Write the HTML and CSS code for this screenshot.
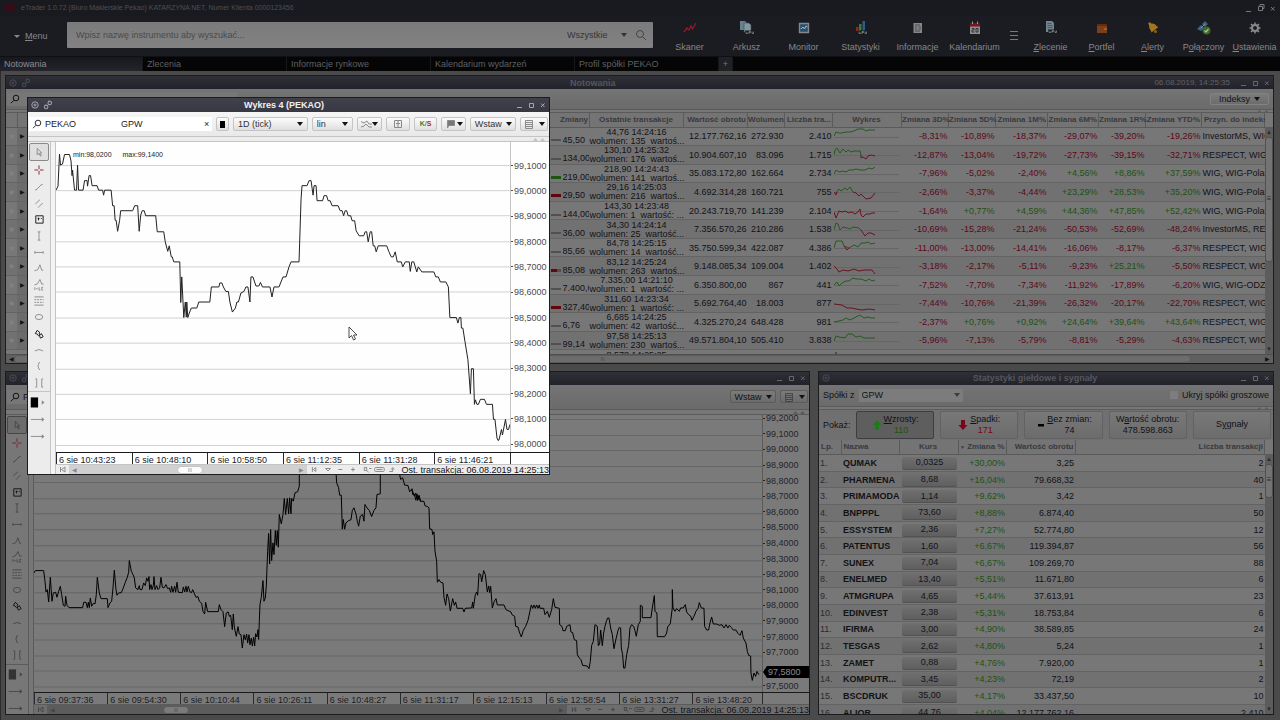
FILE: index.html
```html
<!DOCTYPE html>
<html lang="pl">
<head>
<meta charset="utf-8">
<title>eTrader</title>
<link rel="stylesheet" href="styles.css">
</head>
<body>
<svg class="defs" aria-hidden="true">
  <symbol id="i-gear" viewBox="0 0 10 10"><circle cx="5" cy="5" r="3.2"/><circle cx="5" cy="5" r="1"/></symbol>
  <symbol id="i-link" viewBox="0 0 10 10"><rect x="5" y="1" width="3.4" height="3.4" rx="1.4" transform="rotate(20 6 3)"/><rect x="1.4" y="5.2" width="3.4" height="3.4" rx="1.4" transform="rotate(20 3 7)"/><path d="M4.2 5.8 5.6 4.2"/></symbol>
  <symbol id="i-loupe" viewBox="0 0 10 10"><circle cx="6" cy="4" r="2.8"/><path d="M4 6.2 1 9.2"/></symbol>
  <symbol id="i-win" viewBox="0 0 34 10"><path d="M2 7.500H7M14.500 3.500H18.500V7.500H14.500ZM26 3.500 29.500 7M29.500 3.500 26 7"/></symbol>
  <symbol id="i-up2" viewBox="0 0 12 4"><path d="M0 4 2.500 1 5 4ZM7 4 9.500 1 12 4Z"/></symbol>
  <symbol id="t-cursor" viewBox="0 0 24 16"><path d="M10 4v7l2-1.500 1.500 3 1-.5-1.500-3H15Z"/></symbol>
  <symbol id="t-cross" viewBox="0 0 24 16"><path d="M12 3v4M12 9v4M7 8h4M13 8h4" class="red"/></symbol>
  <symbol id="t-line" viewBox="0 0 24 16"><path d="M8.500 11.500 15 5M8 11h1.500M14.500 5.500h1.500"/></symbol>
  <symbol id="t-par" viewBox="0 0 24 16"><path d="M8 9 13 4.500M11 13l5-5"/></symbol>
  <symbol id="t-note" viewBox="0 0 24 16"><path class="strong" d="M8.500 4.500h8v8h-8ZM10.500 7.500h2M11.500 6.500v3M14 7.500h1"/></symbol>
  <symbol id="t-vert" viewBox="0 0 24 16"><path d="M12 3.500v9M10.500 3.500h3M10.500 12.500h3"/></symbol>
  <symbol id="t-horz" viewBox="0 0 24 16"><path d="M7.500 8.500h9M7.500 7v3M16.500 7v3"/></symbol>
  <symbol id="t-zig" viewBox="0 0 24 16"><path d="M7 11 10.500 10 13 4.500 15 10.500h1.500"/></symbol>
  <symbol id="t-abc" viewBox="0 0 24 16"><path d="M7 8 10.500 6.500 13 2l2 5h2M7.500 10.500v3M9 12h1.500M12 10.500v3h1.500M16.500 10.500H15v3h1.500"/></symbol>
  <symbol id="t-fib" viewBox="0 0 24 16"><path d="M7 3.500h10M7 12.500h10"/><path stroke-dasharray="2 1" d="M7 6.500h10M7 9.500h10"/></symbol>
  <symbol id="t-oval" viewBox="0 0 24 16"><ellipse cx="12" cy="8" rx="4" ry="2.800"/></symbol>
  <symbol id="t-arrows" viewBox="0 0 24 16"><path class="strong" d="M8 7.500 10 4l3 2.500-1 .5 1 2-1.500 1L10 8ZM12.500 9.500l1.500-1 .5-1 2 3.500-3 1.500Z"/></symbol>
  <symbol id="t-arc" viewBox="0 0 24 16"><path d="M7.500 9q4.500-3 9 0"/></symbol>
  <symbol id="t-brace" viewBox="0 0 24 16"><path d="M13 4q-1.500 0-1.500 2t-1 2q1 0 1 2t1.500 2"/></symbol>
  <symbol id="t-range" viewBox="0 0 24 16"><path d="M8 3.500h1.500v9H8M16.500 3.500H15v9h1.500"/></symbol>
  <symbol id="t-swatch" viewBox="0 0 24 16"><path class="fill" d="M3 3h8v11H3Z"/><path class="head" d="M15 6l3 2.500L15 11Z"/></symbol>
  <symbol id="t-right" viewBox="0 0 24 16"><path d="M3 8.500h13"/><path class="head" d="M15 6l3 2.500L15 11Z"/></symbol>
  <symbol id="s-foot" viewBox="0 0 96 9"><path d="M5.500 2v5M9 2.500 6.500 4.500 9 6.500ZM19 3.500h5l-2.500 2.500ZM32 4.500h4M45 4.500h4M47 2.500v4M58.500 2.500h2.500v3h-2.500ZM61 5.500l2 2M63.500 3.500H66M70 2.500h8q1 0 1 2t-1 2h-8q-1 0-1-2t1-2ZM71 4.500h6M84 6.500h3.500v-3M86 4.500l1.500-2 1.500 2"/></symbol>
</svg>

<header class="titlebar">
  <span class="brand"></span>
  <span>eTrader 1.0.72 (Biuro Maklerskie Pekao) KATARZYNA NET, Numer Klienta 0000123456</span>
  <svg class="appwin" viewBox="0 0 34 10"><path d="M2 8.500H7M14.500 3.500h4v4h-4ZM16 3.500v-2h4v4h-2M27 4l3.500 3.500M30.500 4 27 7.500"/></svg>
</header>

<div class="topbar">
  <button class="menu"><i class="tri"></i><span><u>M</u>enu</span></button>
  <form class="search">
    <input type="text" aria-label="Szukaj instrumentu" placeholder="Wpisz nazwę instrumentu aby wyszukać...">
    <span class="pick"><select aria-label="Zakres"><option>Wszystkie</option></select></span>
    <button type="button" class="go" aria-label="Szukaj"><svg viewBox="0 0 12 12"><circle cx="5" cy="5" r="3.500"/><path d="M7.500 7.500 11 11"/></svg></button>
  </form>
  <nav class="apps wide">
    <button><svg viewBox="0 0 16 16"><path d="M2 12 5 8l2 2 2-4 1.500 3L14 3" fill="none" stroke="#9c1626" stroke-width="1.300"/></svg>Skaner</button>
    <button><svg viewBox="0 0 16 16"><path d="M1 1h5l2 2v7H1Z" fill="#66808c"/><path d="M5 3h5l2 2v7H5Z" fill="#8498a0" stroke="#3c4c54" stroke-width=".6"/><path d="M6 10.500h10v4H6Z" fill="#15161a"/><path d="M7 11.500v2h1.500v-1M10 14v-2.500h1.500v1H10M13 11.500v2h1.500v-2" fill="none" stroke="#8a8a8a" stroke-width=".8"/></svg>Arkusz</button>
    <button><svg viewBox="0 0 16 16"><path d="M3.500 3.500h9v9h-9Z" fill="#27506f" stroke="#868686" stroke-width="1.400"/><path d="M5 9l2-2 1.500 2L10 6l1.500 1" fill="none" stroke="#a8bcc8"/></svg>Monitor</button>
    <button><svg viewBox="0 0 16 16"><path d="M3 7h2.500v4H3Z" fill="#8c2a1c"/><path d="M6 4h2.500v7H6Z" fill="#3e7a2c"/><path d="M9.500 1H12v10H9.500Z" fill="#2c5c8c"/><path d="M5 10.500h10v4H5Z" fill="#15161a"/><path d="M6 11.500v2h1.500v-1M9 14v-2.500h1.500v1H9M12 11.500v2h1.500v-2" fill="none" stroke="#8a8a8a" stroke-width=".8"/></svg>Statystyki</button>
    <button><svg viewBox="0 0 16 16"><path d="M3.500 3H12v10H3.500Z" fill="#868686"/><path d="M5 5h5M5 7h2M8.500 7H11M5 9h2M8.500 9H11M5 11h5" fill="none" stroke="#33343a" stroke-width=".7"/></svg>Informacje</button>
    <button><svg viewBox="0 0 16 16"><path d="M3 3h10v11H3Z" fill="#8c8c8c"/><path d="M3 3h10v3.500H3Z" fill="#7c1420"/><path d="M5.500 1.500v2.500M10.500 1.500v2.500" stroke="#9a9a9a"/><path d="M5 8.500h2v1.500H5V12h2.500M9 8.500V12h2V8.500Z" fill="none" stroke="#33343a"/></svg>Kalendarium</button>
  </nav>
  <button class="burger" aria-label="Więcej"><svg viewBox="0 0 10 12"><path d="M1 2.500h8M1 6.500h8M1 10.500h8"/></svg></button>
  <nav class="apps">
    <button><svg viewBox="0 0 16 16"><path d="M3 1h6l2 2v9H3Z" fill="#71858e"/><path d="M4.500 3.500h4M4.500 5.500h5M4.500 7.500h5" stroke="#33474f" stroke-width=".7"/><path d="M5 9.500h11v4H5Z" fill="#15161a"/><path d="M6 10.500v2h1.500v-1M9 13v-2.500h1.500v1H9M12 10.500v2h1.500v-2" fill="none" stroke="#8a8a8a" stroke-width=".8"/></svg><span><u>Z</u>lecenie</span></button>
    <button><svg viewBox="0 0 16 16"><path d="M3 4h10v9H3Z" fill="#7c3f1c"/><path d="M3 4h10v2H3Z" fill="#5e2d13"/><path d="M10 8h3v2h-3Z" fill="#a05a30"/></svg><span><u>P</u>ortfel</span></button>
    <button><svg viewBox="0 0 16 16"><path d="M3 3.500 5 2l1 1.500q4-.5 6 3l1.500.5-7 5.500-.5-1.500Q3.500 8 4 5Z" fill="#a5741c"/><circle cx="10.500" cy="11.500" r="1.500" fill="#8a5f14"/></svg><span><u>A</u>lerty</span></button>
    <button><svg viewBox="0 0 16 16"><path d="M1 9 5 5l3 3-3 3ZM6 4l3-3 3 3-3 3Z" fill="#3a6486"/><path d="M5 8 9 4" stroke="#7f9db0"/><circle cx="10.500" cy="10.500" r="4" fill="#3f6a1c"/><path d="M8.500 10.500l1.500 1.500 2.500-3" fill="none" stroke="#b5b5b5" stroke-width="1.200"/></svg><span>P<u>o</u>łączony</span></button>
    <button><svg viewBox="0 0 16 16"><circle cx="8" cy="8" r="3" fill="none" stroke="#8a8a8a" stroke-width="2"/><path d="M8 2.500v2M8 11.500v2M2.500 8h2M11.500 8h2M4 4l1.500 1.500M10.500 10.500 12 12M12 4l-1.500 1.500M5.500 10.500 4 12" stroke="#8a8a8a" stroke-width="1.500"/></svg><span><u>U</u>stawienia</span></button>
  </nav>
</div>

<nav class="tabs">
  <button class="on">Notowania</button><button>Zlecenia</button><button>Informacje rynkowe</button><button>Kalendarium wydarzeń</button><button>Profil spółki PEKAO</button><button class="plus">+</button>
</nav>

<main class="desktop">
  <section class="win quotes">
    <div class="bar"><svg class="ic"><use href="#i-gear"/></svg><svg class="ic"><use href="#i-link"/></svg><h2>Notowania</h2><time>06.08.2019, 14:25:35</time><svg class="wb"><use href="#i-win"/></svg></div>
    <div class="tools"><label class="find"><svg class="ic"><use href="#i-loupe"/></svg><input type="text" aria-label="Filtr"></label><button class="btn arrow last">Indeksy</button></div>
    <div class="strip"><svg><use href="#i-up2"/></svg></div>
    <div class="scroller">
      <div class="clip">
      <table class="qt">
        <colgroup><col class="w11"><col class="w11"><col><col class="w94"><col class="w64"><col class="w37"><col class="w48"><col class="w69"><col class="w47"><col class="w47"><col class="w52"><col class="w51"><col class="w47"><col class="w56"><col class="w63"></colgroup>
        <thead><tr><th></th><th></th><th class="r">Zmiany</th><th>Ostatnie transakcje</th><th class="r">Wartość obrotu</th><th class="r">Wolumen</th><th class="r">Liczba tra...</th><th>Wykres</th><th class="r">Zmiana 3D%</th><th class="r">Zmiana 5D%</th><th class="r">Zmiana 1M%</th><th class="r">Zmiana 6M%</th><th class="r">Zmiana 1R%</th><th class="r">Zmiana YTD%</th><th class="l">Przyn. do indeks</th></tr></thead>
        <tbody>
        <tr><td class="st">★</td><td class="ar">▶</td><td><div class="px"><i></i><b>45,50</b></div></td><td class="tr"><p>44,76 14:24:16</p><p>wolumen: 135&nbsp; wartoś...</p></td><td>12.177.762,16</td><td>272.930</td><td>2.410</td><td class="sp"><svg viewBox="0 0 66 18"><path class="base" d="M0 9.500H65"/><path class="g" d="M0 8 2 4 5 5 8 5 12 4 16 4 20 3 24 1 29 1 32 3 35 2 41 2"/></svg></td><td class="dn">-8,31%</td><td class="dn">-10,89%</td><td class="dn">-18,37%</td><td class="dn">-29,07%</td><td class="dn">-39,20%</td><td class="dn">-19,26%</td><td class="l">InvestorMS, WIG</td></tr>
        <tr><td class="st">★</td><td class="ar">▶</td><td><div class="px"><i></i><b>134,00</b></div></td><td class="tr"><p>130,10 14:25:32</p><p>wolumen: 176&nbsp; wartoś...</p></td><td>10.904.607,10</td><td>83.096</td><td>1.715</td><td class="sp"><svg viewBox="0 0 66 18"><path class="base" d="M0 9.500H65"/><path class="g" d="M0 9 1 4 3 2 6 7 9 3 12 6 14 4 17 6 20 5 26 5 27 9"/><path class="d" d="M27 9 27 12 29 11 32 13 34 10 37 9 41 10"/></svg></td><td class="dn">-12,87%</td><td class="dn">-13,04%</td><td class="dn">-19,72%</td><td class="dn">-27,73%</td><td class="dn">-39,15%</td><td class="dn">-32,71%</td><td class="l">RESPECT, WIG</td></tr>
        <tr><td class="st">★</td><td class="ar">▶</td><td><div class="px"><i class="up"></i><b>219,00</b></div></td><td class="tr"><p>218,90 14:24:43</p><p>wolumen: 141&nbsp; wartoś...</p></td><td>35.083.172,80</td><td>162.664</td><td>2.734</td><td class="sp"><svg viewBox="0 0 66 18"><path class="base" d="M0 9.500H65"/><path class="g" d="M0 9 2 5 5 7 9 6 12 7 15 5 19 5 22 4 26 5 31 5 35 3 38 4 41 2"/></svg></td><td class="dn">-7,96%</td><td class="dn">-5,02%</td><td class="dn">-2,40%</td><td class="gn">+4,56%</td><td class="gn">+8,86%</td><td class="gn">+37,59%</td><td class="l">WIG, WIG-Polan</td></tr>
        <tr><td class="st">★</td><td class="ar">▶</td><td><div class="px"><i class="down"></i><b>29,50</b></div></td><td class="tr"><p>29,16 14:25:03</p><p>wolumen: 216&nbsp; wartoś...</p></td><td>4.692.314,28</td><td>160.721</td><td>755</td><td class="sp"><svg viewBox="0 0 66 18"><path class="base" d="M0 9.500H65"/><path class="g" d="M2 10 5 6 7 8 11 5 13 7 16 4 19 9"/><path class="d" d="M0 9 2 12 3 9M19 9 22 10 25 13 27 11 30 14 32 16 37 15 41 10"/></svg></td><td class="dn">-2,66%</td><td class="dn">-3,37%</td><td class="dn">-4,44%</td><td class="gn">+23,29%</td><td class="gn">+28,53%</td><td class="gn">+35,20%</td><td class="l">WIG, WIG-Polan</td></tr>
        <tr><td class="st">★</td><td class="ar">▶</td><td><div class="px"><i></i><b>144,00</b></div></td><td class="tr"><p>143,30 14:23:48</p><p>wolumen: 1&nbsp; wartość: ...</p></td><td>20.243.719,70</td><td>141.239</td><td>2.104</td><td class="sp"><svg viewBox="0 0 66 18"><path class="base" d="M0 9.500H65"/><path class="d" d="M0 10 2 16 5 9 8 10 12 9 14 11 18 10 21 12 24 10 26 7 27 13 29 15 32 12 36 12 38 11 41 11"/></svg></td><td class="dn">-1,64%</td><td class="gn">+0,77%</td><td class="gn">+4,59%</td><td class="gn">+44,36%</td><td class="gn">+47,85%</td><td class="gn">+52,42%</td><td class="l">WIG, WIG-Polan</td></tr>
        <tr><td class="st">★</td><td class="ar">▶</td><td><div class="px"><i></i><b>36,00</b></div></td><td class="tr"><p>34,30 14:24:14</p><p>wolumen: 25&nbsp; wartość...</p></td><td>7.356.570,26</td><td>210.286</td><td>1.538</td><td class="sp"><svg viewBox="0 0 66 18"><path class="base" d="M0 9.500H65"/><path class="g" d="M0 9 2 2 4 3 6 9 9 6 13 7 16 8 19 6 25 7 27 9"/><path class="d" d="M27 9 29 12 31 15 34 12 37 12 41 14"/></svg></td><td class="dn">-10,69%</td><td class="dn">-15,28%</td><td class="dn">-21,24%</td><td class="dn">-50,53%</td><td class="dn">-52,69%</td><td class="dn">-48,24%</td><td class="l">InvestorMS, RES</td></tr>
        <tr><td class="st">★</td><td class="ar">▶</td><td><div class="px"><i></i><b>85,66</b></div></td><td class="tr"><p>84,78 14:25:15</p><p>wolumen: 14&nbsp; wartość...</p></td><td>35.750.599,34</td><td>422.087</td><td>4.386</td><td class="sp"><svg viewBox="0 0 66 18"><path class="base" d="M0 9.500H65"/><path class="g" d="M0 9 2 2 8 2 10 7 15 9 20 6 24 8 27 4 31 4 34 3 37 5 41 4"/><path class="d" d="M10 7 13 11 15 9"/></svg></td><td class="dn">-11,00%</td><td class="dn">-13,00%</td><td class="dn">-14,41%</td><td class="dn">-16,06%</td><td class="dn">-8,17%</td><td class="dn">-6,37%</td><td class="l">RESPECT, WIG</td></tr>
        <tr><td class="st">★</td><td class="ar">▶</td><td><div class="px"><i class="down half"></i><b>85,08</b></div></td><td class="tr"><p>83,12 14:25:24</p><p>wolumen: 263&nbsp; wartoś...</p></td><td>9.148.085,34</td><td>109.004</td><td>1.402</td><td class="sp"><svg viewBox="0 0 66 18"><path class="base" d="M0 9.500H65"/><path class="d" d="M0 8 3 11 5 14 9 12 14 13 17 12 20 11 25 13 30 12 34 12 38 12 41 16"/></svg></td><td class="dn">-3,18%</td><td class="dn">-2,17%</td><td class="dn">-5,11%</td><td class="dn">-9,23%</td><td class="gn">+25,21%</td><td class="dn">-5,50%</td><td class="l">RESPECT, WIG</td></tr>
        <tr><td class="st">★</td><td class="ar">▶</td><td><div class="px"><i></i><b>7.400,00</b></div></td><td class="tr"><p>7.335,00 14:21:10</p><p>wolumen: 1&nbsp; wartość: ...</p></td><td>6.350.800,00</td><td>867</td><td>441</td><td class="sp"><svg viewBox="0 0 66 18"><path class="base" d="M0 9.500H65"/><path class="g" d="M0 9 3 6 5 10 8 7 12 5 15 5 19 2 22 3 27 3 32 5 35 3 38 5 41 4"/></svg></td><td class="dn">-7,52%</td><td class="dn">-7,70%</td><td class="dn">-7,34%</td><td class="dn">-11,92%</td><td class="dn">-17,89%</td><td class="dn">-6,20%</td><td class="l">WIG, WIG-ODZI</td></tr>
        <tr><td class="st">★</td><td class="ar">▶</td><td><div class="px"><i class="down"></i><b>327,40</b></div></td><td class="tr"><p>311,60 14:23:34</p><p>wolumen: 1&nbsp; wartość: ...</p></td><td>5.692.764,40</td><td>18.003</td><td>877</td><td class="sp"><svg viewBox="0 0 66 18"><path class="base" d="M0 9.500H65"/><path class="d" d="M0 9 8 10 13 13 18 13 22 14 28 15 35 14 41 15"/></svg></td><td class="dn">-7,44%</td><td class="dn">-10,76%</td><td class="dn">-21,39%</td><td class="dn">-26,32%</td><td class="dn">-20,17%</td><td class="dn">-22,70%</td><td class="l">RESPECT, WIG</td></tr>
        <tr><td class="st">★</td><td class="ar">▶</td><td><div class="px"><i></i><b>6,76</b></div></td><td class="tr"><p>6,685 14:24:25</p><p>wolumen: 42&nbsp; wartość...</p></td><td>4.325.270,24</td><td>648.428</td><td>981</td><td class="sp"><svg viewBox="0 0 66 18"><path class="base" d="M0 9.500H65"/><path class="g" d="M0 9 5 8 9 7 12 5 16 7 20 5 26 2 30 5 34 4 37 5 41 5"/></svg></td><td class="dn">-2,37%</td><td class="gn">+0,76%</td><td class="gn">+0,92%</td><td class="gn">+24,64%</td><td class="gn">+39,64%</td><td class="gn">+43,64%</td><td class="l">RESPECT, WIG</td></tr>
        <tr><td class="st">★</td><td class="ar">▶</td><td><div class="px"><i></i><b>99,14</b></div></td><td class="tr"><p>97,58 14:25:13</p><p>wolumen: 230&nbsp; wartoś...</p></td><td>49.571.804,10</td><td>505.410</td><td>3.838</td><td class="sp"><svg viewBox="0 0 66 18"><path class="base" d="M0 9.500H65"/><path class="g" d="M0 9 2 4 5 5 11 6 14 2 18 2 22 5 26 4 30 6 36 6 41 6"/></svg></td><td class="dn">-5,96%</td><td class="dn">-7,13%</td><td class="dn">-5,79%</td><td class="dn">-8,81%</td><td class="dn">-5,29%</td><td class="dn">-4,63%</td><td class="l">RESPECT, WIG</td></tr>
        <tr><td></td><td></td><td></td><td class="tr"><p>8,578 14:25:25</p><p>&nbsp;</p></td><td></td><td></td><td></td><td class="sp"><svg viewBox="0 0 66 18"><path class="g" d="M0 9 2 1 4 5"/></svg></td><td></td><td></td><td></td><td></td><td></td><td></td><td></td></tr>
        </tbody>
      </table>
      </div>
      <div class="vscroll"><i>▲</i><span class="vthumb long">≡</span><i>▼</i></div>
    </div>
    <div class="hscroll"><i>◀</i><span class="hthumb full">III</span><i>▶</i></div>
  </section>

  <section class="win back">
    <div class="bar"><svg class="ic"><use href="#i-gear"/></svg><svg class="ic"><use href="#i-link"/></svg><h2></h2><svg class="wb"><use href="#i-win"/></svg></div>
    <div class="tools"><label class="find"><svg class="ic"><use href="#i-loupe"/></svg><input type="text" value="PEKAO" aria-label="Instrument"></label><button class="btn arrow last word">Wstaw</button><button class="btn arrow menuish" aria-label="Lista"><svg class="list" viewBox="0 0 10 10"><path d="M1.500 1.500h7v8h-7ZM1.500 3.500h7M1.500 5.500h7M1.500 7.500h7"/></svg></button></div>
    <div class="strip"><svg><use href="#i-up2"/></svg></div>
    <div class="chart">
      <div class="palette"><div class="set">
        <button class="on" aria-label="Kursor"><svg><use href="#t-cursor"/></svg></button><button aria-label="Krzyż"><svg><use href="#t-cross"/></svg></button><button aria-label="Linia"><svg><use href="#t-line"/></svg></button><button aria-label="Linie równoległe"><svg><use href="#t-par"/></svg></button><button aria-label="Notatka"><svg><use href="#t-note"/></svg></button><button aria-label="Pion"><svg><use href="#t-vert"/></svg></button><button aria-label="Poziom"><svg><use href="#t-horz"/></svg></button><button aria-label="Zygzak"><svg><use href="#t-zig"/></svg></button><button aria-label="ABC"><svg><use href="#t-abc"/></svg></button><button aria-label="Fibonacci"><svg><use href="#t-fib"/></svg></button><button aria-label="Elipsa"><svg><use href="#t-oval"/></svg></button><button aria-label="Strzałki"><svg><use href="#t-arrows"/></svg></button><button aria-label="Łuk"><svg><use href="#t-arc"/></svg></button><button aria-label="Klamra"><svg><use href="#t-brace"/></svg></button><button aria-label="Zakres"><svg><use href="#t-range"/></svg></button></div>
        <div class="set2"><button aria-label="Kolor"><svg><use href="#t-swatch"/></svg></button><button aria-label="Styl"><svg><use href="#t-right"/></svg></button><button aria-label="Grubość"><svg><use href="#t-right"/></svg></button></div>
      </div>
      <div class="split"></div>
      <div class="area">
        <div class="plotrow">
          <svg class="plot" viewBox="34 414 728 277" preserveAspectRatio="none">
            <path class="grid" d="M34 418.500H762M34 434.500H762M34 449.500H762M34 465.500H762M34 481.500H762M34 497.500H762M34 512.500H762M34 528.500H762M34 544.500H762M34 559.500H762M34 575.500H762M34 591.500H762M34 607.500H762M34 622.500H762M34 638.500H762M34 654.500H762M34 669.500H762M34 685.500H762"/>
            <g transform="translate(0 470) scale(.3333)"><path class="price" d="M102 305 106 298 131 298 135 330 138 362 142 355 146 392 151 318 156 390 160 365 167 363 171 378 176 360 181 345 185 370 190 402 195 405 197 375 201 402 207 409 248 409 251 393 258 393 262 409 265 393 268 409 271 380 275 405 280 396 285 398 289 370 292 318 298 365 303 382 322 382 324 409 330 395 335 390 339 350 343 297 348 355 351 372 356 365 364 364 370 350 376 333 382 318 386 303 388 268 394 300 399 310 403 320 407 350 414 355 418 343 420 355 426 355 431 335 436 343 440 320 444 330 447 316 449 355 453 340 456 355 460 343 462 316 465 355 470 343 474 355 479 350 483 318 487 348 492 350 498 340 503 352 508 350 512 363 515 345 519 363 524 345 527 363 531 333 535 363 547 364 550 347 554 362 558 345 561 362 565 345 570 362 575 364 578 355 582 364 588 378 594 376 598 390 605 396 609 420 614 428 617 393 623 421 655 421 658 400 663 415 669 421 674 466 679 425 685 422 688 435 692 432 697 475 700 428 703 467 709 495 714 466 718 488 723 490 727 530 732 490 736 505 740 488 743 515 747 490 750 520 754 500 757 524 761 498 764 524 767 487 771 497 774 475 776 504 778 450 780 400 784 378 789 328 792 390 796 380 799 345 803 240 806 187 809 278 812 175 815 268 819 215 822 250 826 178 829 222 832 178 835 228 838 130 844 158 849 130 853 82 857 130 862 82 866 128 869 80 873 128 875 82 880 90 885 65 893 62 898 45 898 0M1008 0 1010 35 1016 50 1019 72 1024 72 1027 174 1030 145 1034 174 1038 155 1046 148 1053 146 1057 118 1062 110 1068 128 1072 150 1076 165 1081 135 1088 130 1092 150 1095 100 1101 110 1108 118 1115 136 1122 118 1128 110 1131 70 1141 68 1141 0M1197 0 1202 25 1208 20 1214 42 1224 43 1229 62 1236 55 1243 75 1247 66 1252 88 1256 75 1262 92"/></g>
            <g transform="translate(410 360) scale(.3333)"><path class="price" d="M2 388 6 383 8 400 14 400 17 417 21 398 24 417 27 402 32 420 42 421 45 434 52 436 57 440 59 503 66 505 68 520 72 512 75 570 80 600 82 663 87 655 92 663 99 665 102 708 107 732 111 698 116 712 121 749 128 712 133 732 137 722 141 741 158 741 162 752 166 741 185 740 188 722 190 741 196 700 200 692 203 702 207 637 212 640 215 662 221 628 226 640 232 692 236 674 239 694 242 675 247 740 253 720 258 712 262 731 282 731 288 745 303 752 306 760 314 765 317 795 324 797 328 812 334 827 340 807 347 795 354 777 362 740 364 731 368 741 372 731 376 741 380 731 384 741 388 731 390 741 401 741 405 760 412 750 418 768 425 745 430 712 435 738 448 741 449 790 456 795 459 808 466 808 470 795 480 790 483 812 488 814 493 835 500 838 502 880 508 890 513 895 518 912 532 914 537 922 541 900 545 852 550 840 555 790 562 795 565 853 569 848 572 806 577 853 581 815 585 795 589 780 593 770 597 770 602 800 607 820 612 862 618 833 624 808 628 798 632 800 634 860 638 880 641 920 645 920 650 880 656 852 660 800 665 790 671 795 675 808 679 825 685 790 691 780 691 732 697 735 697 769 723 769 727 740 733 703 735 750 741 755 742 826 764 826 770 815 773 797 781 787 787 740 787 685 789 740 795 750 800 742 808 750 812 740 820 740 826 730 830 752 836 760 842 764 846 777 852 765 858 750 864 742 868 724 874 740 882 741 884 795 890 806 896 806 900 785 905 767 910 788 920 788 928 792 936 790 942 800 948 790 954 800 958 792 964 798 970 806 978 806 984 816 990 822 996 808 1000 830 1008 845 1012 870 1016 882 1022 884 1023 935 1027 957 1032 935 1037 945 1041 930 1047 940"/></g>
          </svg>
          <div class="yaxis"><ol><li>99,2000<li>99,1000<li>99,0000<li>98,9000<li>98,8000<li>98,7000<li>98,6000<li>98,5000<li>98,4000<li>98,3000<li>98,2000<li>98,1000<li>98,0000<li>97,9000<li>97,8000<li>97,7000<li class="now"><span>97,5800</span><li>97,5000</ol></div>
        </div>
        <div class="xaxis"><span>6 sie 09:37:36</span><span>6 sie 09:54:30</span><span>6 sie 10:10:44</span><span>6 sie 10:26:11</span><span>6 sie 10:48:27</span><span>6 sie 11:31:17</span><span>6 sie 12:15:13</span><span>6 sie 12:58:54</span><span>6 sie 13:31:27</span><span class="end">6 sie 13:48:20</span><span class="rest"></span></div>
        <div class="foot"><button aria-label="Początek"><svg viewBox="0 0 9 9"><path d="M2.500 2v5M7 2 3.500 4.500 7 7Z"/></svg></button><div class="track"><i>◀</i><span class="hthumb" style="margin-left:21%">III</span><i class="last">▶</i></div><svg class="ficons"><use href="#s-foot"/></svg><span>Ost. transakcja: 06.08.2019 14:25:13</span></div>
      </div>
    </div>
  </section>

  <section class="win stats">
    <div class="bar"><svg class="ic"><use href="#i-gear"/></svg><h2>Statystyki giełdowe i sygnały</h2><svg class="wb"><use href="#i-win"/></svg></div>
    <div class="tools"><label for="mkt">Spółki z</label><span class="pick"><select id="mkt"><option>GPW</option></select></span><label class="check last"><input type="checkbox"> Ukryj spółki groszowe</label></div>
    <div class="strip"><svg><use href="#i-up2"/></svg></div>
    <div class="filters"><span>Pokaż:</span>
      <button class="on"><svg viewBox="0 0 10 10"><path fill="#1f7a1a" d="M5 0 9.500 5H7v5H3V5H.5Z"/></svg><span><u>W</u>zrosty:<br><em class="gn">110</em></span></button>
      <button><svg viewBox="0 0 10 10"><path fill="#7c0418" d="M5 10 .5 5H3V0h4v5h2.500Z"/></svg><span><u>S</u>padki:<br><em class="red">171</em></span></button>
      <button><svg viewBox="0 0 10 10" class="minus"><path d="M3 4h6v2.500H3Z"/></svg><span><u>B</u>ez zmian:<br>74</span></button>
      <button><span>W<u>a</u>rtość obrotu:<br>478.598.863</span></button>
      <button><span>S<u>y</u>gnały</span></button>
    </div>
    <div class="scroller">
      <div class="clip">
      <table class="stt">
        <colgroup><col class="w22"><col class="w58"><col class="w59"><col class="w48"><col class="w69"><col></colgroup>
        <thead><tr><th class="l">Lp.</th><th class="l">Nazwa</th><th>Kurs</th><th class="r"><small>▼</small> Zmiana %</th><th class="r">Wartość obrotu</th><th class="r">Liczba transakcji</th></tr></thead>
        <tbody>
        <tr><td>1.</td><td>QUMAK</td><td><button>0,0325</button></td><td>+30,00%</td><td>3,25</td><td>2</td></tr>
        <tr><td>2.</td><td>PHARMENA</td><td><button>8,68</button></td><td>+16,04%</td><td>79.668,32</td><td>40</td></tr>
        <tr><td>3.</td><td>PRIMAMODA</td><td><button>1,14</button></td><td>+9,62%</td><td>3,42</td><td>1</td></tr>
        <tr><td>4.</td><td>BNPPPL</td><td><button>73,60</button></td><td>+8,88%</td><td>6.874,40</td><td>50</td></tr>
        <tr><td>5.</td><td>ESSYSTEM</td><td><button>2,36</button></td><td>+7,27%</td><td>52.774,80</td><td>12</td></tr>
        <tr><td>6.</td><td>PATENTUS</td><td><button>1,60</button></td><td>+6,67%</td><td>119.394,87</td><td>56</td></tr>
        <tr><td>7.</td><td>SUNEX</td><td><button>7,04</button></td><td>+6,67%</td><td>109.269,70</td><td>88</td></tr>
        <tr><td>8.</td><td>ENELMED</td><td><button>13,40</button></td><td>+5,51%</td><td>11.671,80</td><td>6</td></tr>
        <tr><td>9.</td><td>ATMGRUPA</td><td><button>4,65</button></td><td>+5,44%</td><td>37.613,91</td><td>23</td></tr>
        <tr><td>10.</td><td>EDINVEST</td><td><button>2,38</button></td><td>+5,31%</td><td>18.753,84</td><td>6</td></tr>
        <tr><td>11.</td><td>IFIRMA</td><td><button>3,00</button></td><td>+4,90%</td><td>38.589,85</td><td>24</td></tr>
        <tr><td>12.</td><td>TESGAS</td><td><button>2,62</button></td><td>+4,80%</td><td>5,24</td><td>1</td></tr>
        <tr><td>13.</td><td>ZAMET</td><td><button>0,88</button></td><td>+4,76%</td><td>7.920,00</td><td>1</td></tr>
        <tr><td>14.</td><td>KOMPUTR...</td><td><button>3,45</button></td><td>+4,23%</td><td>72,19</td><td>2</td></tr>
        <tr><td>15.</td><td>BSCDRUK</td><td><button>35,00</button></td><td>+4,17%</td><td>33.437,50</td><td>10</td></tr>
        <tr><td>16.</td><td>ALIOR</td><td><button>44,76</button></td><td>+4,04%</td><td>12.177.762,16</td><td>2.410</td></tr>
        </tbody>
      </table>
      </div>
      <div class="vscroll"><i>▲</i><span class="vthumb">≡</span><i>▼</i></div>
    </div>
  </section>

  <section class="win front">
    <div class="bar"><svg class="ic"><use href="#i-gear"/></svg><svg class="ic"><use href="#i-link"/></svg><h2>Wykres 4 (PEKAO)</h2><svg class="wb"><use href="#i-win"/></svg></div>
    <div class="tools">
      <label class="find"><svg class="ic"><use href="#i-loupe"/></svg><input type="text" value="PEKAO" aria-label="Instrument"><span>GPW</span><button class="x" aria-label="Wyczyść">×</button></label>
      <button class="btn sq" aria-label="Kolor"><i></i></button>
      <span class="pick btn p1"><select aria-label="Okres"><option>1D (tick)</option></select></span>
      <span class="pick btn p2"><select aria-label="Skala"><option>lin</option></select></span>
      <button class="btn arrow tight" aria-label="Typ wykresu"><svg class="list" viewBox="0 0 12 10"><path d="M1 2.500 4 4l3-2 2 3 3 0M1 8l3-1 2-2 3 3h3"/></svg></button>
      <button class="btn tool" aria-label="Siatka"><svg class="list" viewBox="0 0 10 10"><path d="M1.500 1.500h7v7h-7ZM5 1.500v7M3 4.500h4"/></svg></button>
      <button class="btn tool ks" aria-label="Kupno i sprzedaż"><b>K</b>/<b>S</b></button>
      <button class="btn arrow tight" aria-label="Flaga"><svg class="list" viewBox="0 0 10 10"><path fill="#777" d="M1.500 1.500h7v5H3L1.500 9Z"/></svg></button>
      <button class="btn arrow last word">Wstaw</button>
      <button class="btn arrow menuish" aria-label="Lista"><svg class="list" viewBox="0 0 10 10"><path d="M1.500 1.500h7v8h-7ZM1.500 3.500h7M1.500 5.500h7M1.500 7.500h7"/></svg></button>
    </div>
    <div class="strip"><svg><use href="#i-up2"/></svg></div>
    <div class="chart">
      <div class="palette"><div class="set">
        <button class="on" aria-label="Kursor"><svg><use href="#t-cursor"/></svg></button><button aria-label="Krzyż"><svg><use href="#t-cross"/></svg></button><button aria-label="Linia"><svg><use href="#t-line"/></svg></button><button aria-label="Linie równoległe"><svg><use href="#t-par"/></svg></button><button aria-label="Notatka"><svg><use href="#t-note"/></svg></button><button aria-label="Pion"><svg><use href="#t-vert"/></svg></button><button aria-label="Poziom"><svg><use href="#t-horz"/></svg></button><button aria-label="Zygzak"><svg><use href="#t-zig"/></svg></button><button aria-label="ABC"><svg><use href="#t-abc"/></svg></button><button aria-label="Fibonacci"><svg><use href="#t-fib"/></svg></button><button aria-label="Elipsa"><svg><use href="#t-oval"/></svg></button><button aria-label="Strzałki"><svg><use href="#t-arrows"/></svg></button><button aria-label="Łuk"><svg><use href="#t-arc"/></svg></button><button aria-label="Klamra"><svg><use href="#t-brace"/></svg></button><button aria-label="Zakres"><svg><use href="#t-range"/></svg></button></div>
        <div class="set2"><button aria-label="Kolor"><svg><use href="#t-swatch"/></svg></button><button aria-label="Styl"><svg><use href="#t-right"/></svg></button><button aria-label="Grubość"><svg><use href="#t-right"/></svg></button></div>
      </div>
      <div class="split"></div>
      <div class="area">
        <div class="minmax"><span>min:98,0200</span><span>max:99,1400</span></div>
        <div class="plotrow">
          <svg class="plot" viewBox="56 143 453 309" preserveAspectRatio="none">
            <path class="grid" d="M56 166.500H509M56 191.500H509M56 216.500H509M56 242.500H509M56 267.500H509M56 292.500H509M56 318.500H509M56 343.500H509M56 369.500H509M56 394.500H509M56 419.500H509M56 445.500H509"/>
            <path class="price" d="M56 191 58 187 59.500 155 60.500 166 62.500 165 64.500 155.500H69.500L71 162 72 176.500 72.500 171 74.500 191H76.500L77.500 166 78.500 191H83L84.500 181.500H87L87.500 187 89 176.500H90.500L92 186.500H97L98.500 191H102.500L103.500 196 104.500 191H111L112.500 206.500H114L115 221H116L117.500 232 119.500 221 120.500 211.500H132.500L134.500 206.500H137.500L139 232 140.500 216 142 211.500H144L145.500 216.500H155.500L157 232.500H163.500L165 242.500 167.500 252 169 246.500 171 257.500H172L173.500 262.500H179.500L180.500 303 181.500 277.500 183.500 318 185 302.500 186 317.500 186.500 302.500 187.500 318 189 313.500 191 308.500H196.500L198.500 302.500H209.500L211 287.500H218.500L219.500 283.500H221.500L223 287.500 225.500 292H228L229.500 302.500 232 312.500 235 308.500 236.500 302.500H238L240.500 293.500 243.500 292 245.500 287.500H247.500L249.500 302.500 250.500 277.500H252.500L255.500 286.500H258.500L260 283 262 287.500H269.500L271.500 297.500 273.500 287.500H278.500L280.500 282.500 282.500 277.500H285.500L288.500 267.500 290.500 262.500H298.500L300.500 200 301.500 186.500H306.500L308.500 181.500H310.500L312.500 196 313.500 186.500H315.500L316.500 201.500H322L323.500 196.500H326L327.500 201.500H329.500L331.500 206.500H337.500L339.500 211.500H341.500L343 216.500 344.500 211.500H346L347.500 216.500H350L351.500 221.500H354L355.500 231.500 358.500 236.500H363L364.500 232.500H366L367.500 242.500 369.500 232.500H371L372.500 246.500H374L375.500 252.500 377.500 246.500H386L388 252 390.500 257.500H392.500L394.500 252.500 396.500 262.500H400.500L402 267.500 404.500 262.500H408.500L409.500 272 411 262.500H413L414.500 267.500 416 272.500 417.500 267.500 421 272.500H433L435 277.500H437.500L439.500 282.500H445L447.500 287.500 449 318H455.500L457 323.500 458.500 318H460L460.500 328.500H462L464 341.500 467 360 469.500 394 470.500 369H472.500L473.500 404.500 474.500 400 476 404.500H477.500L479.500 399.500H483.500L485.500 404.500H491.500L492.500 419.500H494L496 438 497 440.500 498 440 500.500 429.500 501.500 435 504.500 419.500 506 429.500H507.500L509 424.500"/>
          </svg>
          <div class="yaxis"><ol><li>99,1000<li>99,0000<li>98,9000<li>98,8000<li>98,7000<li>98,6000<li>98,5000<li>98,4000<li>98,3000<li>98,2000<li>98,1000<li>98,0000</ol></div>
        </div>
        <div class="xaxis"><span>6 sie 10:43:23</span><span>6 sie 10:48:10</span><span>6 sie 10:58:50</span><span>6 sie 11:12:35</span><span>6 sie 11:31:28</span><span class="end">6 sie 11:46:21</span><span class="rest"></span></div>
        <div class="foot"><button aria-label="Początek"><svg viewBox="0 0 9 9"><path d="M2.500 2v5M7 2 3.500 4.500 7 7Z"/></svg></button><div class="track"><i>◀</i><span class="hthumb" style="margin-left:43%">III</span><i class="last">▶</i></div><svg class="ficons"><use href="#s-foot"/></svg><span>Ost. transakcja: 06.08.2019 14:25:13</span></div>
      </div>
    </div>
  </section>
  <svg class="pointer" viewBox="0 0 10 16"><path d="M1 1v11l2.500-2.500L5.500 14l2-1-2-4H9Z" fill="#fff" stroke="#222" stroke-width=".8"/></svg>
</main>
</body>
</html>
```
FILE: styles.css
```css
* { box-sizing: border-box; }
html, body { height: 100%; }
body {
  margin: 0; display: flex; flex-direction: column; overflow: hidden;
  background: #1b1c22; color: #121216;
  font: 9px/10px "Liberation Sans", Arial, sans-serif;
}
button, input, select { font: inherit; color: inherit; border: 0; padding: 0; margin: 0; background: none; }
select { appearance: none; flex: 1; min-width: 0; }
h2, p, ol { margin: 0; padding: 0; list-style: none; }
h2 { font: bold 9px/12px "Liberation Sans", Arial, sans-serif; }
svg { fill: none; stroke: none; flex: none; }
em { font-style: normal; }
.defs { position: absolute; width: 0; height: 0; }
.last { margin-left: auto; }
.w11 { width: 11px; } .w22 { width: 22px; } .w37 { width: 37px; } .w47 { width: 47px; }
.w48 { width: 48px; } .w51 { width: 51px; } .w52 { width: 52px; } .w56 { width: 56px; }
.w58 { width: 58px; } .w59 { width: 59px; } .w63 { width: 63px; } .w64 { width: 64px; }
.w69 { width: 69px; } .w94 { width: 94px; }

/* application header */
.titlebar { display: flex; align-items: center; gap: 5px; height: 16px; padding: 0 2px 0 4px; font-size: 7px; color: #4d4e54; background: #191a20; }
.brand { width: 12px; height: 8px; border-radius: 4px; background: #330e18; }
.appwin { width: 34px; height: 10px; margin-left: auto; stroke: #77787c; }
.topbar { display: flex; align-items: center; height: 40px; color: #86878b; }
.menu { display: flex; align-items: center; gap: 5px; width: 67px; padding-left: 14px; }
.tri { width: 0; border: 3px solid transparent; border-top-color: #86878b; border-bottom: 0; }
.search { display: flex; align-items: center; flex: 1; height: 26px; margin: 0 8px 2px 0; padding: 0 0 0 9px; border-radius: 1px; background: linear-gradient(#7b7b7b, #828282); color: #33343a; }
.search input { flex: 1; }
.search input::placeholder { color: #4a4a4c; }
.search .pick { width: 60px; }
.go { width: 24px; margin-left: 2px; }
.go svg { width: 12px; height: 12px; stroke: #44454a; stroke-width: 1; display: block; margin: auto; }
.pick { display: flex; align-items: center; }
.pick::after, .arrow::after { content: ""; border: 3px solid transparent; border-top: 4px solid currentColor; border-bottom: 0; margin-left: 4px; }
.apps { display: grid; grid-template-columns: repeat(5, 51px); }
.apps.wide { grid-template-columns: repeat(6, 57px); }
.apps button { display: flex; flex-direction: column; align-items: center; gap: 6px; white-space: nowrap; }
.apps svg { width: 16px; height: 16px; }
.burger { width: 22px; }
.burger svg { width: 10px; height: 12px; stroke: #77787c; stroke-width: 1; }
.tabs { display: flex; height: 15px; background: #050506; border-top: 1px solid #101014; }
.tabs button { width: 144px; padding-left: 4px; text-align: left; color: #5f6064; border-right: 1px solid #17181c; }
.tabs .on { background: linear-gradient(#17181e, #24252c); color: #8a8b8f; width: 143px; }
.tabs .plus { width: 14px; padding: 0; text-align: center; background: #202125; color: #77787c; }

/* desktop and windows */
.desktop {
  position: relative; flex: 1; min-height: 0; display: grid; padding: 4px 6px 5px 4px; gap: 7px 8px;
  grid-template-columns: 805fr 456fr; grid-template-rows: minmax(0, 289fr) minmax(0, 345fr); background: #4a4a4b;
  border-left: 1px solid #2c2c2e;
}
.win {
  --face: #777778; --edge: #5b5b5c; --ink: #121216; --line: #666667; --soft: #6e6e6f; --btn1: #7b7b7c; --btn2: #6c6c6d; --muted: #47474a;
  display: flex; flex-direction: column; min-width: 0; overflow: hidden; border: 1px solid #1b1c20; background: var(--face); color: var(--ink);
}
.quotes { grid-column: 1 / -1; }
.bar { display: flex; align-items: center; gap: 3px; height: 13px; flex: none; padding: 0 0 0 2px; background: linear-gradient(#2e2f37, #22232a); color: #55565c; }
.bar h2 { flex: 1; text-align: center; }
.bar time { font-size: 8px; color: #606168; margin-right: 6px; }
.ic { width: 10px; height: 10px; stroke: #4a4b52; stroke-width: 1; }
.wb { width: 34px; height: 10px; stroke: #66676c; }
.tools { display: flex; align-items: center; gap: 4px; height: 20px; flex: none; padding: 0 4px 0 1px; background: linear-gradient(#747475, #6b6b6c); }
.back .tools, .front .tools { height: 24px; padding-right: 1px; }
.find { display: flex; align-items: center; gap: 3px; width: 230px; height: 14px; padding: 0 3px; background: var(--face); }
.find .ic { stroke: var(--ink); }
.find input { width: 73px; }
.btn { display: flex; align-items: center; justify-content: center; height: 13px; padding: 0 5px; border: 1px solid var(--edge); border-radius: 2px; background: linear-gradient(var(--btn1), var(--btn2)); }
.quotes .btn { padding: 0 8px; height: 12px; border-color: #828283; }
.list { width: 12px; height: 10px; stroke: var(--muted); }
.strip { display: flex; justify-content: flex-end; align-items: center; height: 4px; flex: none; padding-right: 4px; border-top: 1px solid var(--edge); border-bottom: 1px solid var(--edge); }
.strip svg { width: 12px; height: 4px; fill: var(--edge); }
.back .strip, .front .strip { height: 6px; }
.btn.word { width: 46px; padding: 0; }
.btn.menuish { width: 28px; padding: 0; }

/* tables */
.scroller { display: flex; flex: 1; min-height: 0; }
.clip { flex: 1; min-width: 0; overflow: hidden; }
table { width: 100%; table-layout: fixed; border-collapse: collapse; line-height: 9px; }
.qt { height: 256px; }
.stt { height: 282px; }
th { height: 14px; padding: 0 1px 0 0; font-size: 8px; color: #3a3a3d; background: #747475; border-right: 1px solid #5a5a5b; border-bottom: 1px solid #5a5a5b; white-space: nowrap; }
th.r { text-align: right; } th.l { text-align: left; padding-left: 2px; }
th small { font-size: 5px; }
.stt th { height: 15px; }
td { padding: 0 1px 0 0; text-align: right; white-space: nowrap; overflow: hidden; box-shadow: inset 0 -1px #636364; }
tbody tr:nth-child(even) { background: #717172; }
td.l { text-align: left; padding-left: 1px; }
.st { color: #828283; text-align: center; font-size: 8px; }
.ar { font-size: 6px; text-align: center; background: #6b6b6c; }
.dn { color: #5e0718; } .gn { color: #1d5211; } .red { color: #7c0418; }
.px { display: flex; justify-content: flex-end; align-items: center; gap: 2px; padding-top: 7px; }
.px i { width: 10px; height: 2px; background: #505051; }
.px i.up { height: 3px; background: #1c560c; } .px i.down { height: 3px; background: #64040c; }
.px i.half { background: linear-gradient(90deg, #64040c 60%, #505051 60%); }
.px b { width: 26px; font-weight: normal; text-align: left; overflow: hidden; }
td.tr { padding: 0; text-align: left; overflow: visible; }
.tr p:first-child { text-align: center; }
.sp { padding: 0 0 0 1px; }
.sp svg { display: block; width: 66px; height: 18px; }
.base { stroke: #666667; } .g { stroke: #245a1c; } .d { stroke: #6e1020; }
.vscroll { display: flex; flex-direction: column; width: 8px; margin-top: 14px; background: #5c5c5d; font-size: 5px; text-align: center; color: #2a2a2c; }
.vscroll i, .hscroll i, .track i { font-style: normal; font-size: 6px; }
.vscroll i:last-child { margin-top: auto; }
.vthumb { height: 34px; padding-top: 10px; border: 1px solid #505051; border-radius: 3px; background: #737374; font-size: 8px; }
.vthumb.long { height: 125px; padding-top: 56px; }
.hscroll { display: flex; align-items: center; height: 9px; flex: none; padding: 0 3px; background: #606061; border-top: 1px solid #505051; }
.hthumb { width: 26px; height: 8px; line-height: 6px; border: 1px solid var(--edge); border-radius: 4px; background: var(--btn1); color: var(--muted); font-size: 5px; text-align: center; }
.hthumb.full { flex: 1; margin-right: 74px; background: #6c6c6d; }

/* statistics */
.stats .tools { padding: 0 4px; height: 21px; }
.stats .pick { width: 104px; height: 13px; padding: 0 3px; background: #7c7c7d; }
.stats .pick::after { opacity: .6; }
.check { display: flex; align-items: center; gap: 4px; }
.check input { appearance: none; width: 8px; height: 8px; background: #7d7d7e; }
.filters { display: flex; align-items: center; gap: 6px; padding: 1px 2px 1px 4px; flex: none; background: #707071; }
.filters > span { width: 27px; }
.filters button { flex: 1; display: flex; align-items: center; justify-content: center; gap: 2px; height: 28px; line-height: 11px; border: 1px solid #626263; border-radius: 2px; background: linear-gradient(#787879, #6c6c6d); }
.filters .on { background: #5e5e5f; border-color: #3e3e40; }
.filters svg { width: 10px; height: 10px; }
.filters .minus { fill: #000; }
.stt td:first-child { text-align: left; color: #2a2a2d; padding-left: 1px; }
.stt td:nth-child(2) { text-align: left; font-weight: bold; padding-left: 2px; overflow: visible; }
.stt td:nth-child(3) { padding: 0 1px 0 3px; }
.stt td:nth-child(4) { color: #1d5211; }
.stt td button { display: block; width: 100%; height: 13px; border-radius: 2px; background: linear-gradient(#6f6f70, #5f5f60); border-bottom: 1px solid #525253; }

/* charts */
.chart { display: flex; flex: 1; min-height: 0; }
.palette { width: 22px; }
.set { display: grid; grid-auto-rows: 1fr; height: 250px; border-bottom: 1px solid var(--edge); }
.set2 { display: grid; grid-auto-rows: 17px; padding-top: 1px; }
.palette button { display: flex; align-items: center; justify-content: center; min-width: 0; color: var(--muted); }
.palette .on { border: 1px solid var(--muted); border-radius: 2px; margin: 1px; background: var(--btn2); }
.palette svg { width: 22px; height: 16px; stroke: var(--muted); stroke-width: 1; }
.strong { stroke: var(--ink); }
.fill, .head { fill: currentColor; stroke: none; }
.fill { fill: var(--swatch, #333); }
symbol .red { stroke: #7c1c2a; }
.split { width: 6px; border-left: 1px solid var(--edge); border-right: 1px solid var(--edge); }
.area { flex: 1; min-width: 0; display: flex; flex-direction: column; position: relative; background: var(--plot, #7a7a7b); }
.plotrow { display: flex; flex: 1; min-height: 0; }
.plot { flex: 1; min-width: 0; width: 100%; height: 100%; }
.grid { stroke: var(--line); vector-effect: non-scaling-stroke; }
.price { stroke: var(--trace, #000); stroke-width: 1; vector-effect: non-scaling-stroke; }
.yaxis { width: 47px; overflow: hidden; border-left: 1px solid var(--edge); color: #252528; }
.yaxis ol { display: grid; grid-auto-rows: 1fr; height: 283px; margin-top: -4px; }
.yaxis li { display: flex; align-items: center; gap: 1px; }
.yaxis li::before { content: ""; width: 2px; height: 1px; background: currentColor; }
.yaxis .now::before { display: none; }
.now span { flex: 1; margin-top: 6px; padding: 1px 5px 1px 5px; background: #000; color: #8c8c8d; clip-path: polygon(0 50%, 4px 0, 100% 0, 100% 100%, 4px 100%); }
.xaxis { display: flex; height: 12px; flex: none; border-top: 1px solid #1a1a1c; color: #1c1c1f; }
.xaxis span { flex: 20 1 0; min-width: 0; padding: 2px 0 0 2px; border-left: 1px solid #2a2a2c; white-space: nowrap; overflow: hidden; }
.xaxis .end { flex-grow: 19; }
.xaxis .rest { flex: none; width: 47px; }
.foot { display: flex; align-items: center; height: 10px; flex: none; background: var(--soft); border-top: 1px solid var(--edge); white-space: nowrap; }
.foot button { width: 13px; display: flex; justify-content: center; }
.foot button svg { width: 9px; height: 9px; stroke: var(--muted); stroke-width: 1; }
.track { flex: 1; display: flex; align-items: center; height: 9px; padding: 0 3px; background: var(--track, #5c5c5d); color: var(--muted); }
.ficons { width: 94px; height: 9px; stroke: var(--muted); }

/* active window */
.front {
  --face: #fff; --edge: #c4c4c4; --line: #d2d2d2; --soft: #ececec; --btn1: #fcfcfc; --btn2: #dfdfdf; --muted: #8a8a8a; --plot: #fefefe; --trace: #222; --swatch: #000; --track: #d0d0d0;
  position: absolute; left: 26px; top: 26px; width: 523px; height: 378px; background: #ececec;
}
.front .bar { height: 14px; background: linear-gradient(#41414c, #383842); color: #f0f0f2; }
.front .ic, .front .wb { stroke: #a5a5ac; }
.front .find .ic { stroke: #333; }
.front .tools { background: linear-gradient(#f6f6f6, #e9e9e9); color: #222; }
.front .find { width: 184px; }
.front .find button { margin-left: auto; }
.front .btn { height: 14px; color: #33333a; }
.front .btn::after { border-top-color: #111; }
.front .sq { width: 13px; padding: 0; }
.sq i { width: 5px; height: 7px; background: #000; }
.p1 { width: 75px; } .p2 { width: 41px; }
.front .pick { padding: 0 4px; }
.front .tight { width: 25px; padding: 0 2px; }
.front .tight::after { margin-left: 0; }
.tool { width: 24px; }
.front .ks { padding: 0; font-size: 7px; }
.ks b:first-child { color: #2c8a2c; } .ks b:last-child { color: #c02030; }
.front .yaxis { width: 39px; color: #4c4c50; }
.front .yaxis ol { height: 304px; margin-top: 11px; }
.front .xaxis span { flex-grow: 1; }
.front .xaxis .rest { width: 39px; flex: none; }
.front .split { background: #f4f4f4; }
.minmax { position: absolute; top: 8px; left: 17px; display: flex; gap: 11px; font-size: 7px; color: #222; }
.pointer { position: absolute; left: 347px; top: 255px; width: 10px; height: 16px; }
```
